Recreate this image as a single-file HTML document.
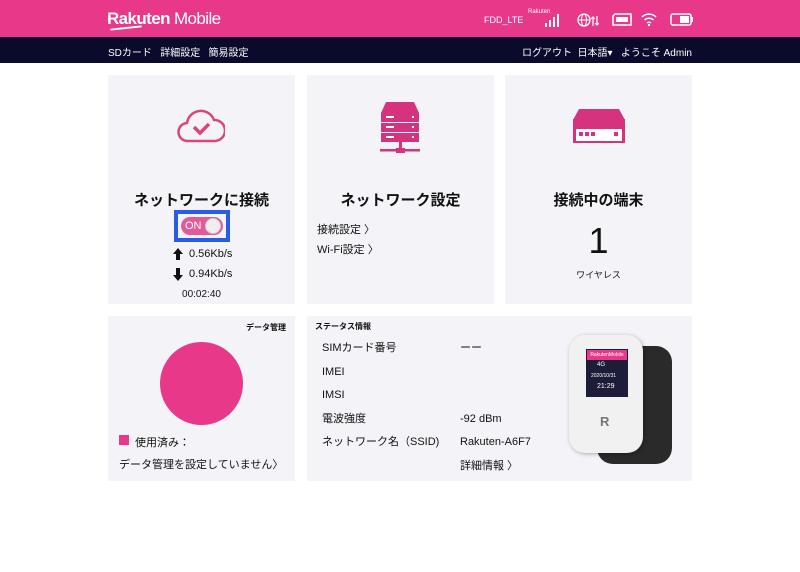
<!DOCTYPE html>
<html><head><meta charset="utf-8"><style>
*{margin:0;padding:0;box-sizing:border-box}
body{width:800px;height:572px;background:#fff;font-family:"Liberation Sans","Noto Sans CJK JP",sans-serif;color:#111;position:relative;overflow:hidden}
.hdr{position:absolute;left:0;top:0;width:800px;height:37px;background:#e7388a}
.nav{position:absolute;left:0;top:37px;width:800px;height:26px;background:#0a0a2c;color:#fff;font-size:10px}
.card{position:absolute;background:#f4f3f8}
.abs{position:absolute}
.t{position:absolute;white-space:nowrap}
</style></head><body>
<div class="hdr">
 <div class="t" style="left:107px;top:9px;color:#fff;font-size:17px;letter-spacing:-0.6px"><b style="font-weight:700">Rakuten</b> Mobile</div>
 <div class="abs" style="left:110px;top:27px;width:32px;height:2px;background:#fff;border-radius:2px;transform:rotate(-6deg)"></div>
 <div class="t" style="left:484px;top:15px;color:#fff;font-size:9px">FDD_LTE</div>
 <div class="t" style="left:528px;top:9px;color:#fff;font-size:6px">Rakuten</div>
 <svg class="abs" style="left:545px;top:13px" width="16" height="14"><rect x="0" y="10" width="2" height="4" fill="#fff"/><rect x="4" y="7" width="2" height="7" fill="#fff"/><rect x="8" y="4" width="2" height="10" fill="#fff"/><rect x="12" y="1" width="2" height="13" fill="#fff"/></svg>
 <svg class="abs" style="left:577px;top:12px" width="22" height="16"><circle cx="7" cy="8" r="6" fill="none" stroke="#fff" stroke-width="1.3"/><ellipse cx="7" cy="8" rx="2.5" ry="6" fill="none" stroke="#fff" stroke-width="1"/><line x1="1" y1="8" x2="13" y2="8" stroke="#fff"/><path d="M16 14V5M14 7l2-2 2 2M20 4v9M18 11l2 2 2-2" stroke="#fff" stroke-width="1.2" fill="none"/></svg>
 <svg class="abs" style="left:612px;top:13px" width="20" height="13"><path d="M3 1h16v11H1V3z" fill="none" stroke="#fff" stroke-width="1.5"/><rect x="4" y="4" width="12" height="5" fill="#fff"/></svg>
 <svg class="abs" style="left:641px;top:12px" width="18" height="15"><path d="M1 5a10 10 0 0 1 14 0M3.5 8a6.5 6.5 0 0 1 9 0M6 11a3 3 0 0 1 4 0" stroke="#fff" stroke-width="1.5" fill="none"/><circle cx="8" cy="13" r="1.2" fill="#fff"/></svg>
 <svg class="abs" style="left:670px;top:13px" width="24" height="13"><rect x="1" y="1" width="20" height="11" rx="2" fill="none" stroke="#fff" stroke-width="1.5"/><rect x="10" y="3" width="9" height="7" fill="#fff"/><rect x="21" y="4" width="2" height="5" fill="#fff"/></svg>
</div>
<div class="nav">
 <div class="t" style="left:108px;top:7px">SDカード&nbsp;&nbsp;&nbsp;詳細設定&nbsp;&nbsp;&nbsp;簡易設定</div>
 <div class="t" style="right:108px;top:7px">ログアウト&nbsp;&nbsp;日本語▾&nbsp;&nbsp;&nbsp;ようこそ Admin</div>
</div>

<div class="card" style="left:108px;top:75px;width:187px;height:229px">
 <svg class="abs" style="left:69px;top:34px" width="48" height="34"><path d="M11 32a9 9 0 0 1-1-18 14 14 0 0 1 27-3 10 10 0 0 1 1 21z" fill="none" stroke="#d9457f" stroke-width="2.5"/><path d="M17 18l6 6 9-9" fill="none" stroke="#d9457f" stroke-width="3.5"/></svg>
 <div class="t" style="left:0;width:187px;text-align:center;top:114px;font-size:15px;font-weight:bold">ネットワークに接続</div>
 <div class="abs" style="left:66px;top:135px;width:56px;height:32px;border:4px solid #2a5ae8;background:#f4f3f8"></div>
 <div class="abs" style="left:73px;top:142px;width:42px;height:18px;border-radius:9px;background:#e35a9a"></div>
 <div class="t" style="left:77px;top:145px;color:#fff;font-size:11px">ON</div>
 <div class="abs" style="left:97px;top:143px;width:16px;height:16px;border-radius:50%;background:#eee;border:1px solid #ccc"></div>
 <div class="abs" style="left:65px;top:173px;width:0;height:0;border-left:5px solid transparent;border-right:5px solid transparent;border-bottom:6px solid #111"></div>
 <div class="abs" style="left:68px;top:178px;width:4px;height:7px;background:#111"></div>
 <div class="t" style="left:81px;top:173px;font-size:11px">0.56Kb/s</div>
 <div class="abs" style="left:68px;top:193px;width:4px;height:7px;background:#111"></div>
 <div class="abs" style="left:65px;top:200px;width:0;height:0;border-left:5px solid transparent;border-right:5px solid transparent;border-top:6px solid #111"></div>
 <div class="t" style="left:81px;top:193px;font-size:11px">0.94Kb/s</div>
 <div class="t" style="left:0;width:187px;text-align:center;top:214px;font-size:10px">00:02:40</div>
</div>
<div class="card" style="left:307px;top:75px;width:187px;height:229px">
 <svg class="abs" style="left:72px;top:26px" width="42" height="54"><path d="M2 12l5-11h28l5 11z" fill="#d6337e"/><rect x="2" y="12" width="38" height="9" fill="#d6337e"/><rect x="2" y="22" width="38" height="9" fill="#d6337e"/><rect x="2" y="32" width="38" height="9" fill="#d6337e"/><g fill="#fff"><rect x="7" y="15" width="8" height="2"/><rect x="7" y="25" width="8" height="2"/><rect x="7" y="35" width="8" height="2"/><rect x="33" y="15" width="2" height="2"/><rect x="33" y="25" width="2" height="2"/><rect x="33" y="35" width="2" height="2"/></g><rect x="20" y="41" width="3" height="7" fill="#d6337e"/><rect x="1" y="48" width="40" height="2.5" fill="#d6337e"/><rect x="17" y="47" width="9" height="5" fill="#d6337e"/></svg>
 <div class="t" style="left:0;width:187px;text-align:center;top:114px;font-size:15px;font-weight:bold">ネットワーク設定</div>
 <div class="t" style="left:10px;top:146px;font-size:11px">接続設定 〉</div>
 <div class="t" style="left:10px;top:166px;font-size:11px">Wi-Fi設定 〉</div>
</div>
<div class="card" style="left:505px;top:75px;width:187px;height:229px">
 <svg class="abs" style="left:68px;top:33px" width="52" height="36"><path d="M0 12l6-11h40l6 11z" fill="#d6337e"/><rect x="0" y="11" width="52" height="24" fill="#d6337e"/><rect x="3" y="21" width="46" height="12" fill="#fff"/><g fill="#d6337e"><rect x="6" y="24" width="4" height="4"/><rect x="12" y="24" width="4" height="4"/><rect x="18" y="24" width="4" height="4"/><rect x="41" y="24" width="4" height="4"/></g></svg>
 <div class="t" style="left:0;width:187px;text-align:center;top:114px;font-size:15px;font-weight:bold">接続中の端末</div>
 <div class="t" style="left:0;width:187px;text-align:center;top:145px;font-size:36px">1</div>
 <div class="t" style="left:0;width:187px;text-align:center;top:193px;font-size:9px">ワイヤレス</div>
</div>

<div class="card" style="left:108px;top:316px;width:187px;height:165px">
 <div class="t" style="right:9px;top:6px;font-size:8px;font-weight:bold">データ管理</div>
 <div class="abs" style="left:52px;top:26px;width:83px;height:83px;border-radius:50%;background:#e7388a"></div>
 <div class="abs" style="left:11px;top:119px;width:10px;height:10px;background:#e7388a"></div>
 <div class="t" style="left:27px;top:118px;font-size:11px">使用済み：</div>
 <div class="t" style="left:11px;top:140px;font-size:11px">データ管理を設定していません〉</div>
</div>
<div class="card" style="left:307px;top:316px;width:385px;height:165px">
 <div class="t" style="left:8px;top:5px;font-size:8px;font-weight:bold">ステータス情報</div>
 <div class="t" style="left:15px;top:21px;font-size:11px;line-height:23.5px">SIMカード番号<br>IMEI<br>IMSI<br>電波強度<br>ネットワーク名（SSID)</div>
 <div class="t" style="left:153px;top:21px;font-size:11px;line-height:23.5px">ーー<br>&nbsp;<br>&nbsp;<br>-92 dBm<br>Rakuten-A6F7<br>詳細情報 〉</div>
 <div class="abs" style="left:290px;top:30px;width:75px;height:118px;border-radius:16px;background:#2a2a2a"></div>
 <div class="abs" style="left:262px;top:19px;width:74px;height:118px;border-radius:16px;background:#f1f1f1;box-shadow:1px 1px 4px rgba(0,0,0,.3)"></div>
 <div class="abs" style="left:279px;top:33px;width:42px;height:48px;background:#1d1d3a"></div>
 <div class="abs" style="left:280px;top:34px;width:40px;height:10px;background:#e7388a;color:#fff;font-size:5px;text-align:center;line-height:10px">RakutenMobile</div>
 <div class="t" style="left:290px;top:46px;color:#fff;font-size:6px">4G</div>
 <div class="t" style="left:284px;top:57px;color:#fff;font-size:5px">2020/10/31</div>
 <div class="t" style="left:290px;top:67px;color:#fff;font-size:7px">21:29</div>
 <div class="t" style="left:293px;top:98px;color:#777;font-size:13px;font-weight:bold">R</div>
</div>
</body></html>
